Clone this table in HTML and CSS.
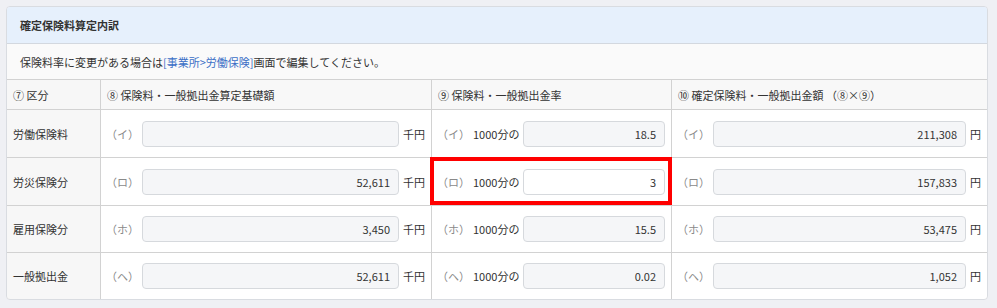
FILE: index.html
```html
<!DOCTYPE html>
<html lang="ja">
<head>
<meta charset="utf-8">
<link rel="stylesheet" href="styles.css">
</head>
<body>
<section class="card">
  <header class="card-head">確定保険料算定内訳</header>
  <p class="note">保険料率に変更がある場合は<a class="link">[事業所&gt;労働保険]</a>画面で編集してください。</p>
  <div class="grid">
    <div class="th c1">⑦ 区分</div>
    <div class="th">⑧ 保険料・一般拠出金算定基礎額</div>
    <div class="th">⑨ 保険料・一般拠出金率</div>
    <div class="th">⑩ 確定保険料・一般拠出金額 （⑧×⑨）</div>

    <div class="td c1 r1">労働保険料</div>
    <div class="td r1"><span class="kana">（イ）</span><span class="inp"></span><span class="unit">千円</span></div>
    <div class="td r1"><span class="kana">（イ）</span><span class="per">1000分の</span><span class="inp">18.5</span></div>
    <div class="td r1"><span class="kana">（イ）</span><span class="inp">211,308</span><span class="unit">円</span></div>

    <div class="td c1 r1">労災保険分</div>
    <div class="td r1"><span class="kana">（ロ）</span><span class="inp">52,611</span><span class="unit">千円</span></div>
    <div class="td r1 hl"><span class="kana">（ロ）</span><span class="per">1000分の</span><span class="inp edit">3</span></div>
    <div class="td r1"><span class="kana">（ロ）</span><span class="inp">157,833</span><span class="unit">円</span></div>

    <div class="td c1">雇用保険分</div>
    <div class="td"><span class="kana">（ホ）</span><span class="inp">3,450</span><span class="unit">千円</span></div>
    <div class="td"><span class="kana">（ホ）</span><span class="per">1000分の</span><span class="inp">15.5</span></div>
    <div class="td"><span class="kana">（ホ）</span><span class="inp">53,475</span><span class="unit">円</span></div>

    <div class="td c1">一般拠出金</div>
    <div class="td"><span class="kana">（ヘ）</span><span class="inp">52,611</span><span class="unit">千円</span></div>
    <div class="td"><span class="kana">（ヘ）</span><span class="per">1000分の</span><span class="inp">0.02</span></div>
    <div class="td"><span class="kana">（ヘ）</span><span class="inp">1,052</span><span class="unit">円</span></div>
  </div>
</section>
</body>
</html>
```

FILE: styles.css
```css
* { box-sizing: border-box; }
html, body { margin: 0; }
body {
  background: #eff0f4;
  padding: 6px 9px 8px 6px;
  font-family: "Noto Sans CJK JP", "Noto Sans", sans-serif;
  font-size: 11px;
  color: #333;
}
.card {
  width: 982px;
  border: 1px solid #d9dce1;
  border-radius: 4px;
  background: #fafafa;
  overflow: hidden;
}
.card-head {
  height: 37px;
  background: #e6f0fc;
  border-bottom: 1px solid #d3d8df;
  padding: 0 13px;
  display: flex;
  align-items: center;
  font-weight: bold;
  font-size: 11px;
  color: #333;
}
.note {
  margin: 0;
  height: 36px;
  padding: 0 13px;
  display: flex;
  align-items: center;
  border-bottom: 1px solid #d2d2d2;
}
.link { color: #3b6fc6; }
.grid {
  display: grid;
  grid-template-columns: 93px 330px 239px 1fr;
  grid-template-rows: 29px 47px 47px 46px 46px;
  gap: 1px;
  background: #d2d2d2;
}
.th, .td {
  display: flex;
  align-items: center;
  background: #fff;
}
.th { background: #f8f8f8; padding: 0 6px; }
.c1 { background: #f7f7f7; padding: 0 6px; }
.td { padding: 0 6px 0 5px; position: relative; }
.td.c1 { padding: 0 6px; }
.kana {
  color: #8a8a8a;
  width: 36px;
  flex: none;
}
.per { flex: none; margin-right: 4px; }
.inp {
  flex: 1;
  height: 26px;
  border: 1px solid #d6d9dd;
  border-radius: 4px;
  background: #f5f6f8;
  display: flex;
  align-items: center;
  justify-content: flex-end;
  padding: 0 8px;
}
.inp.edit { background: #fff; }
.unit { flex: none; margin-left: 4px; }
.hl::after {
  content: "";
  position: absolute;
  top: -1px;
  left: -2px;
  right: -1px;
  bottom: 0;
  border: 4px solid #f00;
}
```
